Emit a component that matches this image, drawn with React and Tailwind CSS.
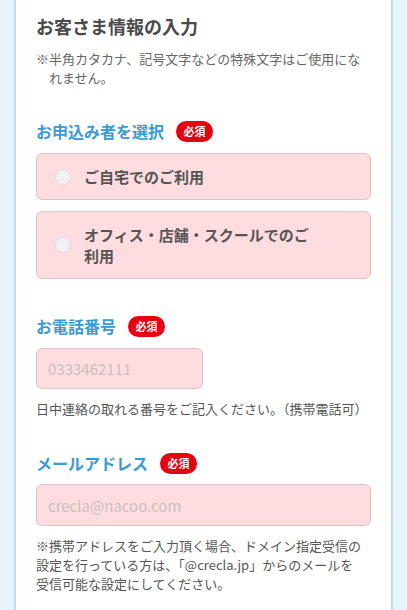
import { useState } from "react";

const font = { fontFamily: '"Noto Sans CJK JP", "Noto Sans", sans-serif' };

const Badge = () => (
  <span className="ml-3 inline-flex h-[21px] w-[37px] items-center justify-center rounded-full bg-[#e50012] text-[11px] font-bold leading-none text-white">
    必須
  </span>
);

const Label = ({ children }) => (
  <div className="flex items-center">
    <span className="text-[16px] font-bold leading-[22px] text-[#3a9ad6]">
      {children}
    </span>
    <Badge />
  </div>
);

const RadioBox = ({ label, checked, onClick }) => (
  <button
    onClick={onClick}
    className="flex w-full items-center rounded-md border border-[#dcc4c7] bg-[#fedcdf] py-3 pl-[18px] pr-[48px] text-left"
  >
    <span className="h-4 w-4 shrink-0 rounded-full border border-[#dddddd] bg-[#f1f1f1]">
      {checked && (
        <span className="m-[3px] block h-2 w-2 rounded-full bg-[#3a9ad6]" />
      )}
    </span>
    <span className="ml-[13px] text-[15px] font-bold leading-[21px] text-[#555555]">
      {label}
    </span>
  </button>
);

export default function App() {
  const [user, setUser] = useState("");

  return (
    <div className="min-h-[610px] bg-[#e8f4fc] px-[14px]" style={font}>
      <div className="min-h-[610px] border-x-2 border-[#bcdff3] bg-white px-5 pb-8 pt-[14px]">
        <h2 className="text-[18px] font-bold leading-6 text-[#4a4a4a]">
          お客さま情報の入力
        </h2>
        <p className="mt-[11px] pl-[1em] -indent-[1em] text-[13px] leading-[19px] text-[#666666]">
          ※半角カタカナ、記号文字などの特殊文字はご使用になれません。
        </p>

        <div className="mt-[33px]">
          <Label>お申込み者を選択</Label>
          <div className="mt-[11px] flex flex-col gap-[11px]">
            <RadioBox
              label="ご自宅でのご利用"
              checked={user === "home"}
              onClick={() => setUser("home")}
            />
            <RadioBox
              label="オフィス・店舗・スクールでのご利用"
              checked={user === "office"}
              onClick={() => setUser("office")}
            />
          </div>
        </div>

        <div className="mt-9">
          <Label>お電話番号</Label>
          <input
            className="mt-[11px] h-[41px] w-[167px] rounded-md border border-[#dcc4c7] bg-[#fedcdf] px-[11px] text-[15px] text-[#555555] outline-none placeholder:text-[#cbbfc0]"
            placeholder="0333462111"
          />
          <p className="mt-[10px] text-[13px] leading-[19px] text-[#555555]">
            日中連絡の取れる番号をご記入ください。（携帯電話可）
          </p>
        </div>

        <div className="mt-[34px]">
          <Label>メールアドレス</Label>
          <input
            className="mt-[10px] h-[42px] w-full rounded-md border border-[#dcc4c7] bg-[#fedcdf] px-[11px] text-[15px] text-[#555555] outline-none placeholder:text-[#cbbfc0]"
            placeholder="crecla@nacoo.com"
          />
          <p className="mt-[10px] text-[13px] leading-[19px] text-[#555555]">
            ※携帯アドレスをご入力頂く場合、ドメイン指定受信の設定を行っている方は、「@crecla.jp」からのメールを
            <br />
            受信可能な設定にしてください。
          </p>
        </div>
      </div>
    </div>
  );
}
